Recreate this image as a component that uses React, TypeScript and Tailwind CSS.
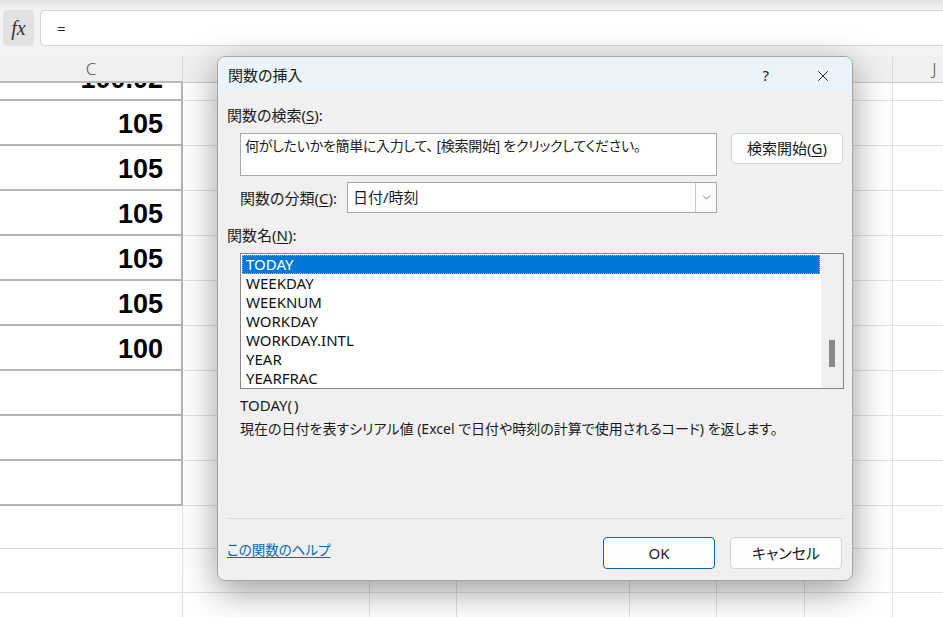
import { X, ChevronDown } from 'lucide-react'

const ui = "font-['Noto_Sans','Noto_Sans_CJK_JP',sans-serif] [font-feature-settings:'palt']"

const cols = [
  { label: 'C', w: 'w-[183px]' },
  { label: '', w: 'w-[187px]' },
  { label: '', w: 'w-[87px]' },
  { label: '', w: 'w-[173px]' },
  { label: '', w: 'w-[87px]' },
  { label: '', w: 'w-[88px]' },
  { label: '', w: 'w-[88px]' },
  { label: 'J', w: 'w-[84px]' },
]

const rows = [
  { h: 'h-[18px]', value: '100.02', thick: true, clip: true },
  { h: 'h-[45px]', value: '105', thick: true },
  { h: 'h-[45px]', value: '105', thick: true },
  { h: 'h-[45px]', value: '105', thick: true },
  { h: 'h-[45px]', value: '105', thick: true },
  { h: 'h-[45px]', value: '105', thick: true },
  { h: 'h-[45px]', value: '100', thick: true },
  { h: 'h-[45px]', value: '', thick: true },
  { h: 'h-[45px]', value: '', thick: true },
  { h: 'h-[45px]', value: '', thick: true },
  { h: 'h-[43px]', value: '', thick: false },
  { h: 'h-[44px]', value: '', thick: false },
  { h: 'h-[44px]', value: '', thick: false },
]

const functions = ['TODAY', 'WEEKDAY', 'WEEKNUM', 'WORKDAY', 'WORKDAY.INTL', 'YEAR', 'YEARFRAC']

function Sheet() {
  return (
    <div className="flex flex-col">
      {/* top strip + formula bar */}
      <div className="h-[10px] bg-gradient-to-b from-[#e2e2e2] to-[#f3f3f3]" />
      <div className="flex h-[36px] items-stretch gap-[6px] bg-[#f3f3f3] pl-[3px]">
        <div className="flex w-[31px] items-center justify-center rounded-[4px] bg-[#e2e2e2] font-['Liberation_Serif',serif] text-[20px] italic text-[#333]">
          fx
        </div>
        <div className="flex flex-1 items-center rounded-l-[5px] border border-r-0 border-[#d4d4d4] bg-white pl-[16px] font-['Noto_Sans',sans-serif] text-[15px] text-[#222]">
          =
        </div>
      </div>
      <div className="h-[10px] bg-[#f3f3f3]" />
      {/* column headers */}
      <div className="flex h-[27px] bg-[#f0f0f0]">
        {cols.map((c, i) => (
          <div
            key={i}
            className={`${c.w} flex shrink-0 items-center justify-center border-r border-b ${i === 0 ? 'border-b-2 border-b-[#b9b9b9]' : 'border-b-[#c8c8c8]'} border-r-[#dadada] font-['Noto_Sans',sans-serif] text-[17px] font-light text-[#555]`}
          >
            {c.label}
          </div>
        ))}
      </div>
      {/* rows */}
      {rows.map((r, ri) => (
        <div key={ri} className={`flex ${r.h} overflow-hidden bg-white`}>
          {cols.map((c, ci) => {
            if (ci === 0) {
              return (
                <div
                  key={ci}
                  className={`${c.w} flex shrink-0 flex-col justify-end overflow-hidden ${r.thick ? 'border-r-2 border-b-2 border-[#b4b4b4]' : 'border-r border-b border-[#dedede]'}`}
                >
                  <div className="flex h-[43px] shrink-0 items-center justify-end pr-[18px] pt-[4px]">
                    <span className="font-['Liberation_Sans',Arial,sans-serif] text-[27px] font-bold leading-none text-black">
                      {r.value}
                    </span>
                  </div>
                </div>
              )
            }
            return <div key={ci} className={`${c.w} shrink-0 border-r border-b border-[#e1e1e1]`} />
          })}
        </div>
      ))}
    </div>
  )
}

function Label({ text, accel }: { text: string; accel: string }) {
  return (
    <span>
      {text}(<span className="underline underline-offset-2">{accel}</span>):
    </span>
  )
}

function Dialog() {
  return (
    <div
      className={`${ui} absolute left-[217px] top-[56px] flex h-[525px] w-[636px] flex-col overflow-hidden rounded-[8px] border border-[#a6a6a6] bg-[#f0f0f0] text-[15px] text-[#1b1b1b] shadow-[0_10px_36px_rgba(0,0,0,0.4)]`}
    >
      {/* title bar */}
      <div className="flex h-[37px] shrink-0 items-center bg-[#ebf3f8] pl-[10px]">
        <span className="flex-1 text-[15px] text-[#1b1b1b]">関数の挿入</span>
        <span className="mr-[45px] font-['Noto_Sans',sans-serif] text-[15px] text-[#222]">?</span>
        <X className="mr-[20px] h-[18px] w-[18px] text-[#222]" strokeWidth={1.3} />
      </div>

      <div className="flex flex-1 flex-col pl-[9px] pr-[9px]">
        <div className="mt-[11px] h-[20px] leading-[20px]">
          <Label text="関数の検索" accel="S" />
        </div>

        <div className="mt-[8px] flex items-start pl-[13px]">
          <div className="h-[43px] w-[477px] border border-[#a8a8a8] bg-white px-[4px] pt-[2px] text-[14px] leading-[20px] tracking-[-0.3px] text-[#222]">
            何がしたいかを簡単に入力して、 [検索開始] をクリックしてください。
          </div>
          <button className="ml-[14px] flex h-[31px] w-[112px] items-center justify-center rounded-[4px] border border-[#d3d3d3] bg-[#fdfdfd] text-[15px] text-[#1b1b1b]">
            検索開始(<span className="underline underline-offset-2">G</span>)
          </button>
        </div>

        <div className="mt-[6px] flex items-center pl-[13px]">
          <span className="w-[107px] leading-[20px]">
            <Label text="関数の分類" accel="C" />
          </span>
          <div className="flex h-[31px] w-[370px] items-stretch border border-[#a8a8a8] bg-white">
            <span className="flex flex-1 items-center pl-[5px] text-[15px]">日付/時刻</span>
            <span className="flex w-[21px] items-center justify-center border-l border-[#c8c8c8] bg-[#fbfbfb]">
              <ChevronDown className="h-[13px] w-[13px] text-[#555]" strokeWidth={1.3} />
            </span>
          </div>
        </div>

        <div className="mt-[12px] h-[20px] leading-[20px]">
          <Label text="関数名" accel="N" />
        </div>

        <div className="ml-[13px] mt-[8px] flex h-[136px] w-[604px] border border-[#878787] bg-white">
          <div className="flex flex-1 flex-col px-[1px] pt-[1px] font-['Noto_Sans','Noto_Sans_CJK_JP',sans-serif]">
            {functions.map((f, i) => (
              <div
                key={f}
                className={`h-[19px] pl-[4px] text-[15px] leading-[19px] ${i === 0 ? 'bg-[#0078d7] text-white outline outline-1 -outline-offset-1 outline-dotted outline-[#e8a848]' : 'text-[#111]'}`}
              >
                {f}
              </div>
            ))}
          </div>
          <div className="flex w-[22px] flex-col items-center bg-[#f0f0f0] pt-[86px]">
            <div className="h-[27px] w-[6px] bg-[#8a8a8a]" />
          </div>
        </div>

        <div className="mt-[6px] pl-[13px] font-['Noto_Sans',sans-serif] text-[15px] leading-[20px]">
          TODAY(<span className="px-[1px]" />)
        </div>
        <div className="mt-[4px] pl-[13px] text-[14px] leading-[20px]">
          現在の日付を表すシリアル値 (Excel で日付や時刻の計算で使用されるコード) を返します。
        </div>

        <div className="mt-auto mb-[18px] h-px w-[616px] bg-[#d9d9d9]" />

        <div className="mb-[11px] flex items-center">
          <div className="flex-1">
            <a className="mb-[6px] block cursor-pointer text-[13.5px] text-[#0067c0] underline underline-offset-2">この関数のヘルプ</a>
          </div>
          <button className="flex h-[32px] w-[112px] items-center justify-center rounded-[4px] border border-[#0067c0] bg-[#fdfdfd] font-['Noto_Sans',sans-serif] text-[15px] text-[#1b1b1b]">
            OK
          </button>
          <button className="ml-[15px] mr-[1px] flex h-[32px] w-[112px] items-center justify-center rounded-[4px] border border-[#d3d3d3] bg-[#fdfdfd] text-[15px] text-[#1b1b1b]">
            キャンセル
          </button>
        </div>
      </div>
    </div>
  )
}

export default function App() {
  return (
    <div className="relative h-[617px] w-[943px] overflow-hidden bg-white">
      <Sheet />
      <Dialog />
    </div>
  )
}
